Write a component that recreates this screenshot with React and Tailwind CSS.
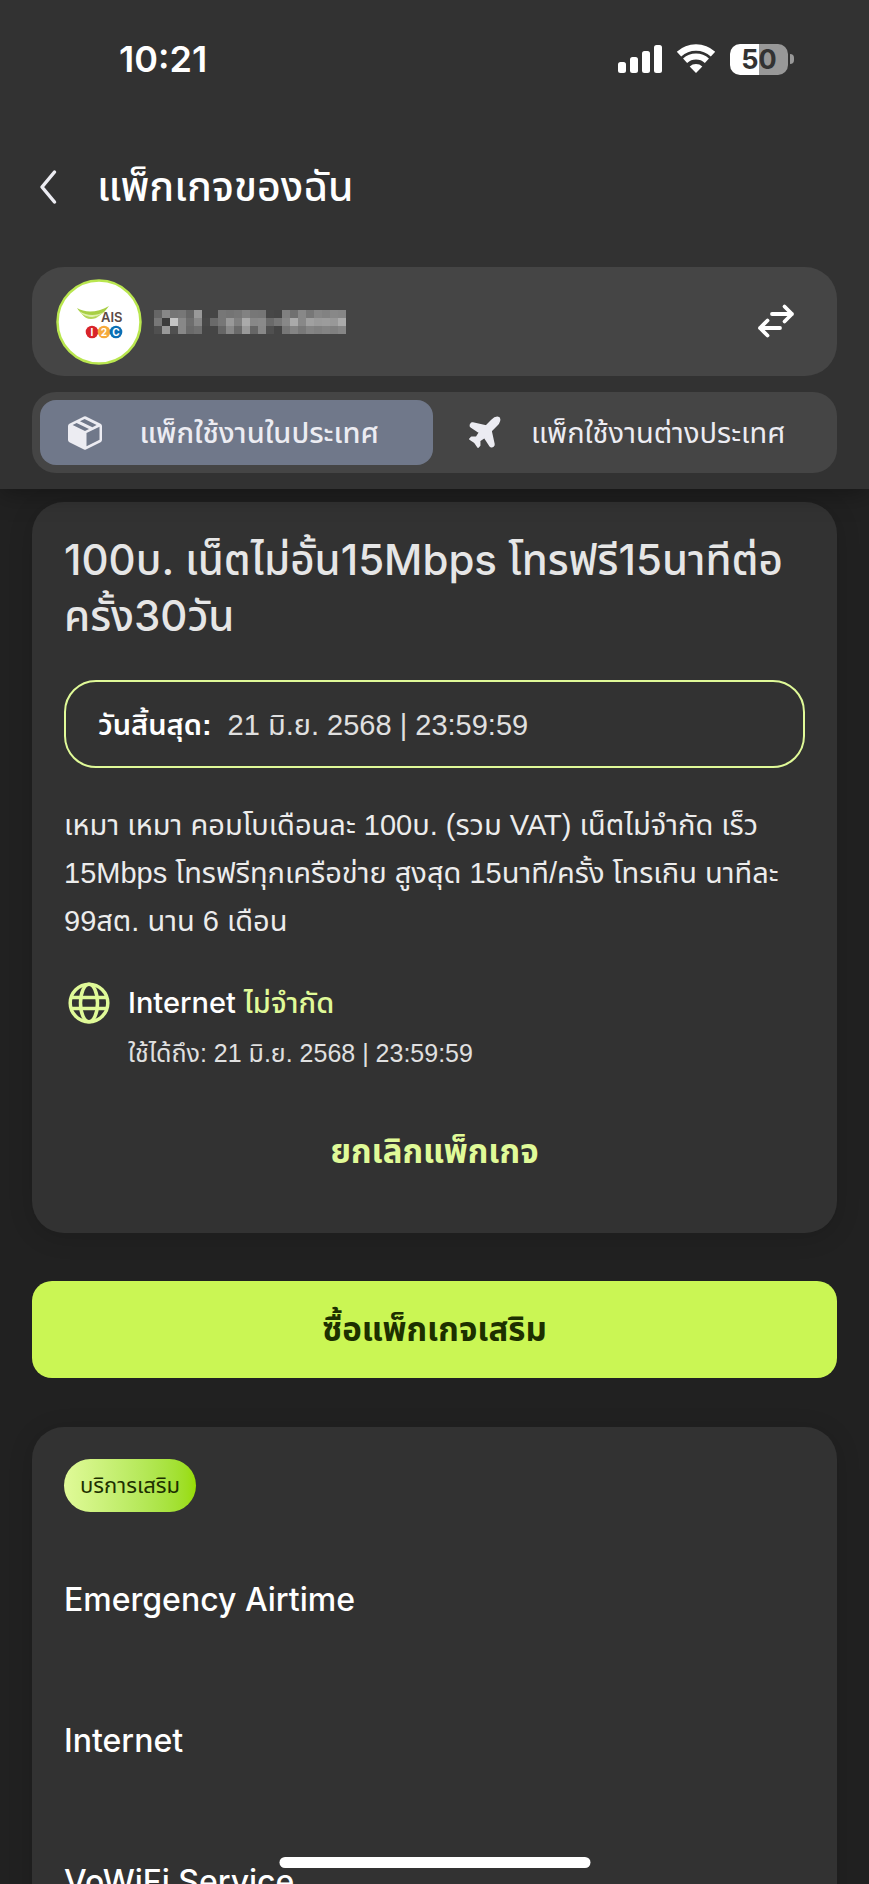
import React, { useState } from 'react';
import { Plane } from 'lucide-react';

const services = ['Emergency Airtime', 'Internet', 'VoWiFi Service'];

// grey levels of the masked phone number, one string per cell
const maskedNumber = [
  ['66', '88', '75', '77', '66', '99', '', '', '77', '74', '77', '82', '77', '76', '47', '', '80', '70', '88', '77', '86', '82', '88', '86'],
  ['77', '3c', 'c4', '88', '6e', '88', '48', '6a', '77', '99', '80', 'aa', '88', '8a', '6a', '77', '88', 'aa', '88', 'a0', '9a', '9c', '98', 'aa'],
  ['50', '99', '50', '88', '6a', '70', '', '', '66', '88', '6a', '99', '66', '88', '50', '', '77', '84', '78', '84', '80', '84', '80', '86']
];

function StatusBar() {
  return <div className="flex h-[118px] items-center justify-between pl-[119px] pr-[75px]">
    <span className="font-['Inter','Noto_Sans_Thai',sans-serif] text-[36px] font-semibold leading-none">10:21</span>
    <div className="flex items-center gap-[14px]">
      <svg width="44" height="30" viewBox="0 0 44 30" fill="#fff" aria-hidden="true">
        <rect x="0" y="18" width="8" height="11" rx="2.5" />
        <rect x="12" y="13" width="8" height="16" rx="2.5" />
        <rect x="24" y="7" width="8" height="22" rx="2.5" />
        <rect x="36" y="1" width="8" height="28" rx="2.5" />
      </svg>
      <svg width="40" height="30" viewBox="0 0 40 30" fill="none" aria-hidden="true">
        <path d="M3 10.2a25 25 0 0 1 34 0" stroke="#fff" strokeWidth="6.5" />
        <path d="M9.1 16.8a16 16 0 0 1 21.800 0" stroke="#fff" strokeWidth="6" />
        <path d="M20 29l-6.300-6.600a9.200 9.200 0 0 1 12.600 0z" fill="#fff" />
      </svg>
      <div className="flex items-center gap-[2px]">
        <div className="flex h-[31px] w-[58px] items-center justify-center rounded-[10px] bg-linear-to-r from-white from-50% to-[#989898] to-50% font-['Inter',sans-serif] text-[27px] font-bold leading-none text-[#323232]">50</div>
        <div className="h-[10px] w-[4px] rounded-r-full bg-[#989898]" />
      </div>
    </div>
  </div>;
}

function AisLogo() {
  return <svg width="86" height="86" viewBox="0 0 86 86" aria-label="AIS 12Call">
    <circle cx="43" cy="43" r="41.5" fill="#fff" stroke="#b9e64f" strokeWidth="2.5" />
    <path d="M21 29c8 5 20 5 32-2-6 9-13 12-19 12-5 0-9-4-13-10z" fill="#a8cf45" />
    <path d="M23 32c8 5 17 5 25 1-5 4-9 5-13 5-5 0-9-2-12-6z" fill="#dff0ad" />
    <path d="M26 35c6 4 13 4 18 1-3 3-6 4-9 4-4 0-7-2-9-5z" fill="#b4d657" />
    <text x="45" y="43" fontSize="13" fontWeight="600" fill="#5b4a45" className="font-['Inter',sans-serif]">AIS</text>
    <circle cx="36" cy="53" r="6.3" fill="#d8232a" />
    <circle cx="48" cy="53" r="6.3" fill="#f6a93b" />
    <circle cx="60" cy="53" r="6.3" fill="#0b6fb5" />
    <g fill="#fff" fontSize="10" fontWeight="700" textAnchor="middle" className="font-['Inter',sans-serif]">
      <text x="36" y="57">I</text>
      <text x="48" y="57">2</text>
      <text x="60" y="57">C</text>
    </g>
  </svg>;
}

function BoxIcon() {
  return <svg width="34" height="34" viewBox="0 0 34 34" fill="#ececf2" aria-hidden="true">
    <path fillRule="evenodd" d="M16 .5q1-.5 2 0l14.600 7.300q1.400.7 1.400 2.200v14q0 1.500-1.400 2.200L18 33.500q-1 .5-2 0L1.400 26.200Q0 25.500 0 24V10q0-1.500 1.400-2.200zM4.600 9l12.400 6 4-2L8.600 7zM12 5.200l12.400 6 4.200-2.200L16.600 3zM18.500 17v13.300l13-6.500V10.800z" />
  </svg>;
}

function GlobeIcon() {
  return <svg width="42" height="42" viewBox="0 0 42 42" fill="none" stroke="#e0fa98" strokeWidth="3.500" className="shrink-0" aria-hidden="true">
    <circle cx="21" cy="21" r="18.800" />
    <ellipse cx="21" cy="21" rx="8.500" ry="18.800" />
    <path d="M3.500 15.500h35M3.500 26.500h35" />
  </svg>;
}

export default function App() {
  const [tab, setTab] = useState('domestic');
  return <div className="flex h-screen flex-col overflow-hidden bg-[#212121] font-['Liberation_Sans','Noto_Sans_Thai',sans-serif] text-white">
    <header className="relative z-10 shrink-0 bg-[#323232] pb-4 shadow-[0_4px_24px_rgba(0,0,0,0.35)]">
      <StatusBar />
      <div className="flex h-[149px] items-center gap-[38px] pb-[12px] pl-[37px]">
        <button type="button" aria-label="ย้อนกลับ">
          <svg width="22" height="36" viewBox="0 0 22 36" fill="none" stroke="#ececf2" strokeWidth="3.500" strokeLinecap="round" strokeLinejoin="round">
            <path d="M17.500 3L5 18l12.500 15" />
          </svg>
        </button>
        <h1 className="text-[41px] font-medium leading-[56px]">แพ็กเกจของฉัน</h1>
      </div>

      <div className="flex flex-col gap-4 px-8">
        <div className="flex h-[109px] items-center rounded-[32px] bg-[#454545] pl-6 pr-[42px]">
          <AisLogo />
          <svg width="192" height="24" viewBox="0 0 192 24" shapeRendering="crispEdges" className="ml-3" aria-hidden="true">
            {maskedNumber.map((row, y) => row.map((v, x) => v && <rect key={`${x}-${y}`} x={x * 8} y={y * 8} width="8" height="8" fill={`#${v}${v}${v}`} />))}
          </svg>
          <button type="button" aria-label="เปลี่ยนหมายเลข" className="ml-auto">
            <svg width="38" height="38" viewBox="0 0 38 38" fill="none" stroke="#fff" strokeWidth="3.800" strokeLinecap="round" strokeLinejoin="round">
              <path d="M15 11h20M27.500 3.500L35 11l-7.500 7.500" />
              <path d="M23 25H3M10.500 17.500L3 25l7.500 7.500" />
            </svg>
          </button>
        </div>

        <div role="tablist" className="flex h-[81px] rounded-3xl bg-[#454545] p-2 text-[29px] leading-[44px] text-[#ececf2]">
          <button type="button" role="tab" aria-selected={tab === 'domestic'} onClick={() => setTab('domestic')} className={`flex flex-1 items-center rounded-2xl pl-7 ${tab === 'domestic' ? 'bg-[#70788a] font-medium' : ''}`}>
            <BoxIcon />
            <span className="flex-1 pr-4 text-center">แพ็กใช้งานในประเทศ</span>
          </button>
          <button type="button" role="tab" aria-selected={tab === 'roaming'} onClick={() => setTab('roaming')} className={`flex flex-1 items-center rounded-2xl pl-8 ${tab === 'roaming' ? 'bg-[#70788a] font-medium' : ''}`}>
            <Plane size={39} fill="currentColor" strokeWidth={1} />
            <span className="flex-1 pr-4 text-center">แพ็กใช้งานต่างประเทศ</span>
          </button>
        </div>
      </div>
    </header>

    <main className="flex flex-col px-8 pt-[13px]">
      <section className="rounded-[32px] bg-[#323232] px-8 pb-12 pt-[30px] shadow-[0_4px_24px_rgba(0,0,0,0.150)]">
        <h2 className="whitespace-nowrap font-['Inter','Noto_Sans_Thai',sans-serif] text-[42px] font-medium leading-[56px] text-[#e6e6e6]">
          100บ. เน็ตไม่อั้น15Mbps โทรฟรี15นาทีต่อ<br />ครั้ง30วัน
        </h2>

        <div className="mt-9 flex h-[88px] items-center gap-4 rounded-[32px] border-2 border-[#e0fa98] px-8 pt-1 text-[29px]">
          <span className="font-semibold">วันสิ้นสุด:</span>
          <span className="text-[#e0e0e0]">21 มิ.ย. 2568 | 23:59:59</span>
        </div>

        <p className="mt-[33px] text-[29px] leading-[48px] text-[#ececec]">
          เหมา เหมา คอมโบเดือนละ 100บ. (รวม VAT) เน็ตไม่จำกัด เร็ว<br />
          15Mbps โทรฟรีทุกเครือข่าย สูงสุด 15นาที/ครั้ง โทรเกิน นาทีละ<br />
          99สต. นาน 6 เดือน
        </p>

        <div className="mt-8 flex items-start gap-[18px] pl-1">
          <span className="flex h-[52px] items-center">
            <GlobeIcon />
          </span>
          <div>
            <p className="font-['Inter','Noto_Sans_Thai',sans-serif] text-[29px] font-medium leading-[52px]">
              Internet <span className="text-[#e0fa98]">ไม่จำกัด</span>
            </p>
            <p className="text-[25px] leading-[48px] text-[#e0e0e0]">ใช้ได้ถึง: 21 มิ.ย. 2568 | 23:59:59</p>
          </div>
        </div>

        <button type="button" className="mt-[42px] h-[66px] w-full text-[33px] font-bold leading-[66px] text-[#e0fa98]">ยกเลิกแพ็กเกจ</button>
      </section>

      <button type="button" className="mt-12 h-[97px] shrink-0 rounded-[20px] bg-[#caf654] text-[33px] font-bold text-[#1d3000]">ซื้อแพ็กเกจเสริม</button>

      <section className="mt-[49px] rounded-t-[32px] bg-[#323232] px-8 pt-8 shadow-[0_4px_24px_rgba(0,0,0,0.150)]">
        <span className="inline-flex h-[53px] items-center rounded-full bg-linear-to-r from-[#e0fa98] to-[#98dc00] px-4 text-[22px] text-[#1d3000]">บริการเสริม</span>
        <ul className="mt-[17px]">
          {services.map(name => <li key={name} className="flex h-[141px] items-center font-['Inter','Noto_Sans_Thai',sans-serif] text-[32px] font-medium">
              {name}
            </li>)}
        </ul>
      </section>
    </main>

    {/* home indicator */}
    <div className="fixed bottom-4 left-1/2 z-20 h-[11px] w-[311px] -translate-x-1/2 rounded-full bg-white" />
  </div>;
}
